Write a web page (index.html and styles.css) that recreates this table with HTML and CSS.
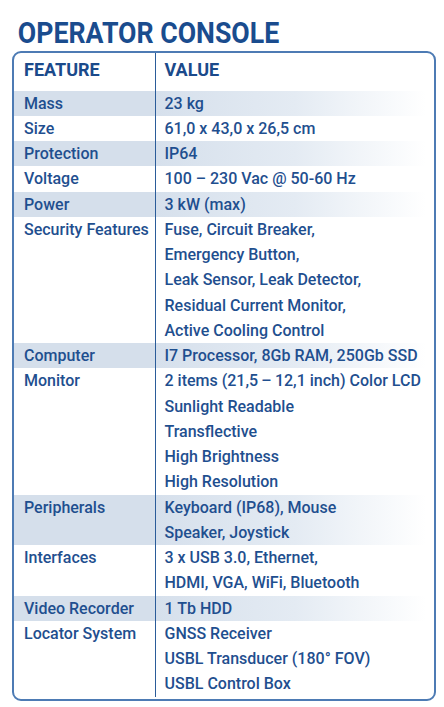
FILE: index.html
```html
<!DOCTYPE html>
<html lang="en">
<head>
<meta charset="utf-8">
<title>Operator Console</title>
<link rel="stylesheet" href="styles.css">
</head>
<body>
<h1 class="title">OPERATOR CONSOLE</h1>
<div class="spec">
  <div class="row head">
    <div class="cell key">FEATURE</div>
    <div class="cell val">VALUE</div>
  </div>
  <div class="row shaded">
    <div class="cell key">Mass</div>
    <div class="cell val">23 kg</div>
  </div>
  <div class="row">
    <div class="cell key">Size</div>
    <div class="cell val">61,0 x 43,0 x 26,5 cm</div>
  </div>
  <div class="row shaded">
    <div class="cell key">Protection</div>
    <div class="cell val">IP64</div>
  </div>
  <div class="row">
    <div class="cell key">Voltage</div>
    <div class="cell val">100 – 230 Vac @ 50-60 Hz</div>
  </div>
  <div class="row shaded">
    <div class="cell key">Power</div>
    <div class="cell val">3 kW (max)</div>
  </div>
  <div class="row">
    <div class="cell key">Security Features</div>
    <div class="cell val">Fuse, Circuit Breaker,<br>Emergency Button,<br>Leak Sensor, Leak Detector,<br>Residual Current Monitor,<br>Active Cooling Control</div>
  </div>
  <div class="row shaded">
    <div class="cell key">Computer</div>
    <div class="cell val">I7 Processor, 8Gb RAM, 250Gb SSD</div>
  </div>
  <div class="row">
    <div class="cell key">Monitor</div>
    <div class="cell val">2 items (21,5&#8201;–&#8201;12,1 inch) Color LCD<br>Sunlight Readable<br>Transflective<br>High Brightness<br>High Resolution</div>
  </div>
  <div class="row shaded">
    <div class="cell key">Peripherals</div>
    <div class="cell val">Keyboard (IP68), Mouse<br>Speaker, Joystick</div>
  </div>
  <div class="row">
    <div class="cell key">Interfaces</div>
    <div class="cell val">3 x USB 3.0, Ethernet,<br>HDMI, VGA, WiFi, Bluetooth</div>
  </div>
  <div class="row shaded">
    <div class="cell key">Video Recorder</div>
    <div class="cell val">1 Tb HDD</div>
  </div>
  <div class="row">
    <div class="cell key">Locator System</div>
    <div class="cell val">GNSS Receiver<br>USBL Transducer (180° FOV)<br>USBL Control Box</div>
  </div>
</div>
</body>
</html>
```

FILE: styles.css
```css
html, body {
  margin: 0;
  padding: 0;
  background: #ffffff;
}

body {
  font-family: Roboto, "Liberation Sans", sans-serif;
  color: #1f4f8f;
}

.title {
  margin: 0;
  padding: 15px 0 0 20px;
  height: 36px;
  font-size: 30px;
  line-height: 36px;
  font-weight: 700;
  color: #1a4c8e;
  white-space: nowrap;
  transform: scaleX(0.89);
  transform-origin: left center;
}

.spec {
  margin: 0 8px 0 12px;
  border: 2px solid #4d7bb4;
  border-radius: 9px;
  padding-bottom: 2.5px;
  overflow: hidden;
}

.row {
  display: grid;
  grid-template-columns: 141px 1fr;
  font-size: 16px;
  font-weight: 500;
  line-height: 25.25px;
}

.cell.key {
  padding-left: 10px;
  white-space: nowrap;
}

.cell.val {
  border-left: 1.5px solid #2b5c99;
  padding-left: 8.5px;
  white-space: nowrap;
}

.row.head {
  font-size: 18px;
  font-weight: 700;
  line-height: 34px;
  color: #1b4a8b;
}

.row.head .cell {
  padding-bottom: 3.5px;
}

.row.shaded .key {
  background: #d5dfeb;
}

.row.shaded .val {
  background: linear-gradient(to right, #d6e0ec 0%, #e4ebf3 50%, #ffffff 97%);
}
```
